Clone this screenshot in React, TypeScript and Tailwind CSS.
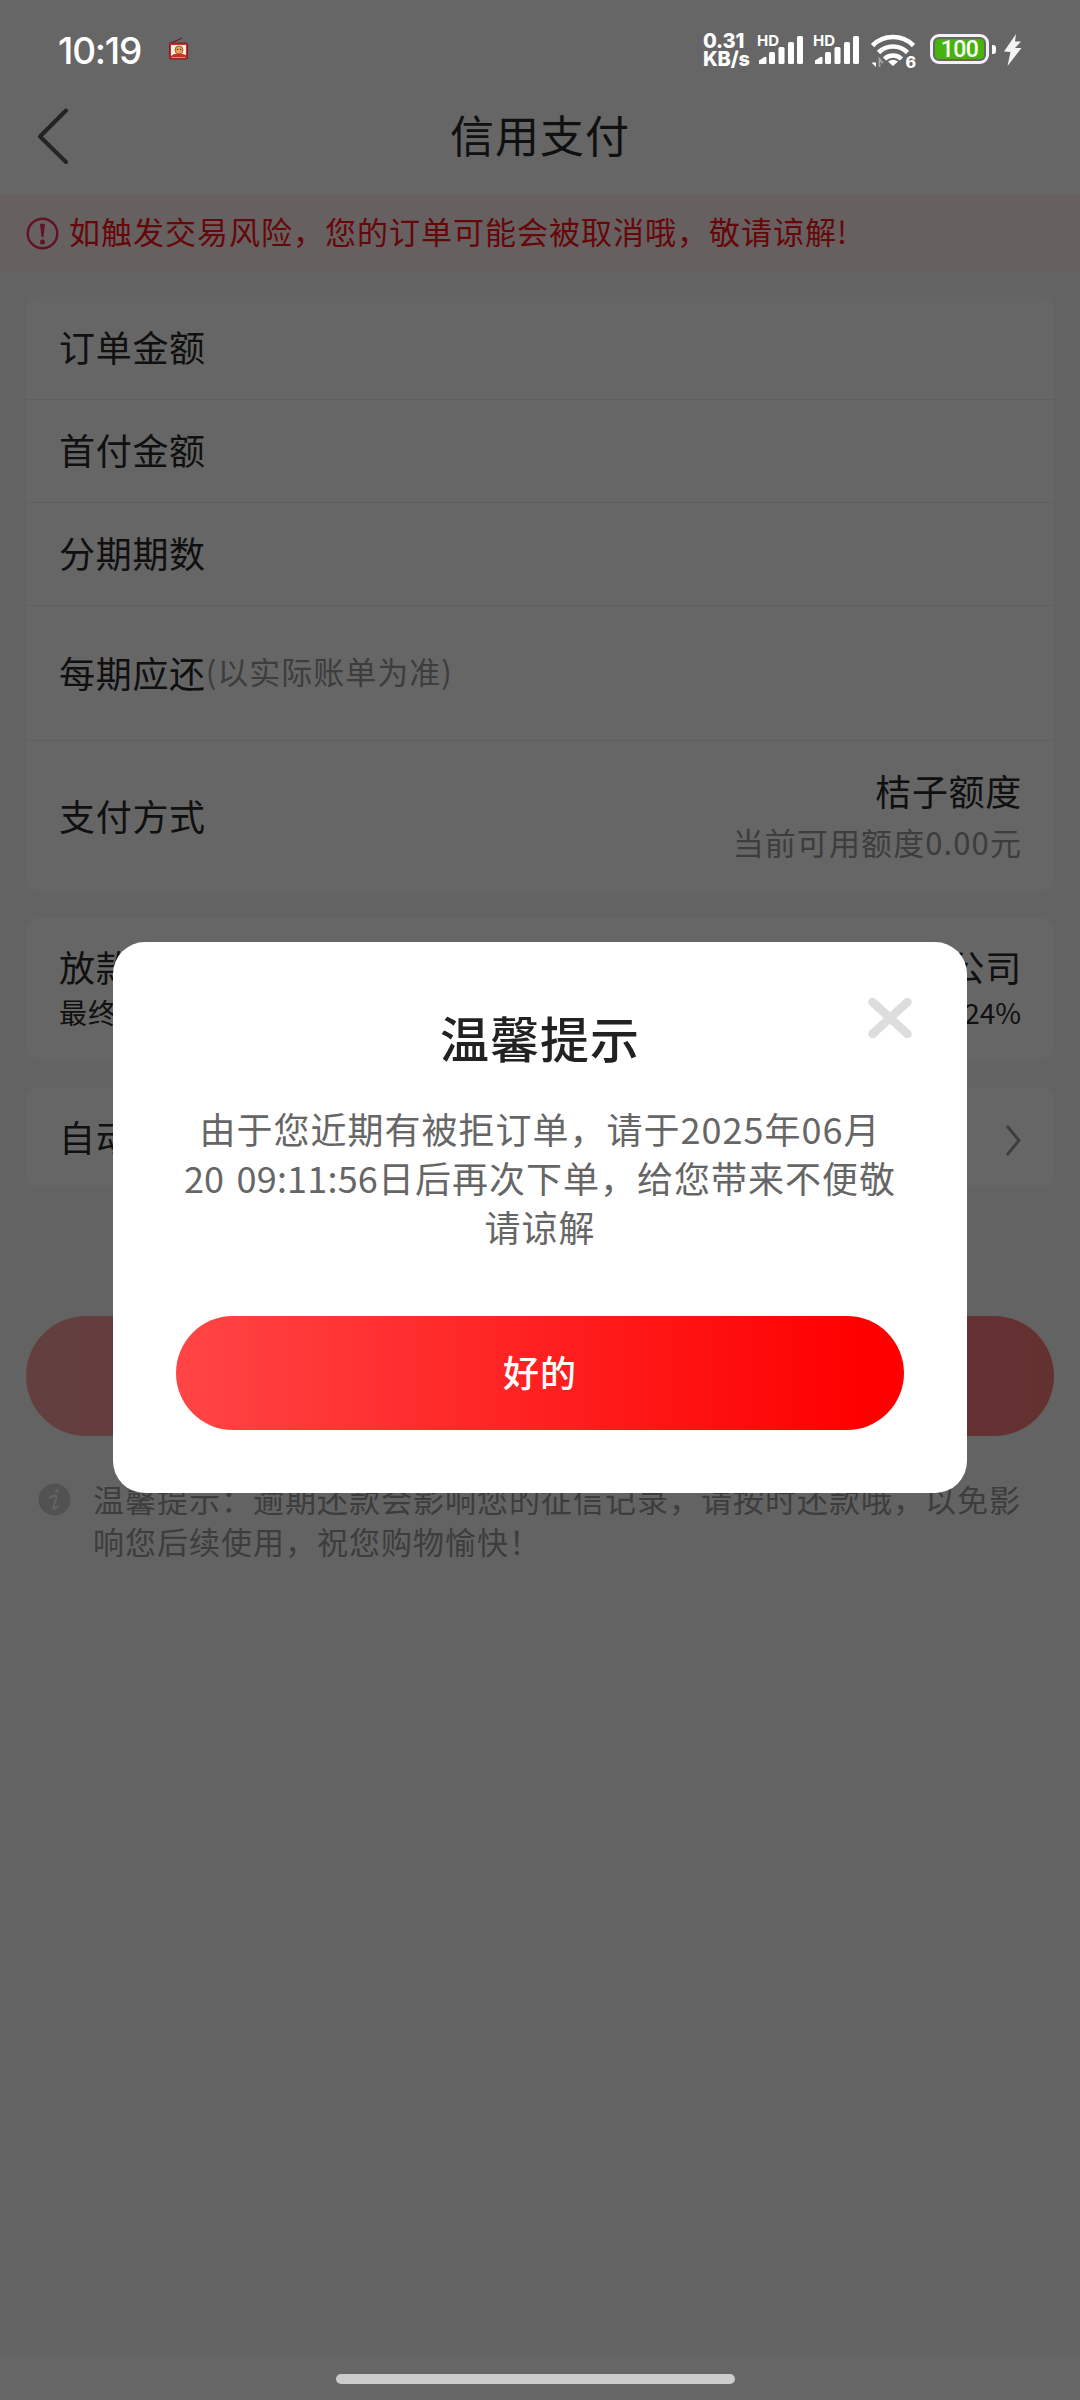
import type { ReactNode } from 'react';

const NOTICE = '如触发交易风险，您的订单可能会被取消哦，敬请谅解!';
const TIP = '温馨提示：逾期还款会影响您的征信记录，请按时还款哦，以免影响您后续使用，祝您购物愉快！';

const PLAIN_ROWS = ['订单金额', '首付金额', '分期期数'];

function SignalBars() {
  return (
    <div className="relative h-[32px] w-[47px]">
      <span className="absolute left-0 -top-px text-[15px] font-bold leading-[15px] text-white">HD</span>
      <svg className="absolute inset-0" width="47" height="32" viewBox="0 0 47 32" fill="#fff">
        <path d="M2 29.5v-3l5.500-3.500q2-.8 2 1v5q0 1-1 1H3q-1 0-1-.5Z" />
        <rect x="12" y="18" width="6" height="12" rx="1.500" />
        <rect x="21.500" y="13" width="6" height="17" rx="1.500" />
        <rect x="31" y="8" width="6" height="22" rx="1.500" />
        <rect x="40" y="2" width="6" height="28" rx="1.500" />
      </svg>
    </div>
  );
}

function WifiIcon() {
  return (
    <div className="relative h-[34px] w-[44px]">
      <svg width="44" height="34" viewBox="0 0 44 34" fill="none" stroke="#fff" strokeWidth="4.600">
        <path d="M1.500 11.500a29 29 0 0 1 41 0" />
        <path d="M7.500 18.500a20.500 20.500 0 0 1 29 0" />
        <path d="M13.500 25a12 12 0 0 1 17 0" />
        <path d="M22 32l-5-4.500q5-3.600 10 0Z" fill="#fff" stroke="none" />
        <path d="M5 24v9L0.500 28.500H5" fill="#fff" stroke="none" />
        <path d="M8.500 33v-8l3.500 4" stroke="#a6a6a6" strokeWidth="1.800" />
      </svg>
      <span className="absolute -right-px bottom-[-2px] text-[16px] font-extrabold leading-[16px] text-white">6</span>
    </div>
  );
}

function Battery() {
  return (
    <div className="flex items-center gap-[3px]">
      <div className="h-[30px] w-[59px] rounded-[9px] border-[3px] border-[#f4f0f8] p-[2px]">
        <div className="flex h-full items-center justify-center rounded-[4px] bg-[#46b40c] pt-[2px] font-['Roboto','Liberation_Sans',sans-serif] text-[23px] font-medium tracking-[-0.5px] text-white">
          100
        </div>
      </div>
      <div className="h-[9px] w-[4px] rounded-r-[3px] bg-white" />
    </div>
  );
}

// small radio icon shown next to the clock
function RadioIcon() {
  return (
    <svg width="22" height="24" viewBox="0 0 22 24" fill="none">
      <path d="M2 6.500L14 1" stroke="#5c2226" strokeWidth="1.200" />
      <rect x="1.500" y="6" width="18" height="16" rx="1" fill="#c92f2c" stroke="#7e2023" />
      <path d="M3 8h15v10l-3-1H6l-3 2Z" fill="#fbeee0" />
      <circle cx="11" cy="13" r="4" fill="#eda05c" stroke="#8c4a28" strokeWidth=".8" />
      <circle cx="9.500" cy="12.500" r=".8" fill="#542" />
      <circle cx="12.500" cy="12.500" r=".8" fill="#542" />
      <path d="M4 20.500h13" stroke="#f08070" />
    </svg>
  );
}

function StatusBar() {
  return (
    <div className="relative z-20 flex h-[92px] shrink-0 font-['Inter','Liberation_Sans',sans-serif] text-white">
      <span className="ml-[58px] mt-[31px] h-[40px] w-[86px] whitespace-nowrap text-[37px] font-medium leading-[40px] tracking-[-1.2px]">
        10:19
      </span>
      <div className="ml-[24px] mt-[37px]">
        <RadioIcon />
      </div>
      <div className="ml-auto mr-[58px] flex items-start pt-[34px]">
        <div className="-mt-[2px] w-[54px] text-[20px] font-extrabold leading-[18px] tracking-[-0.2px]">
          <div>0.31</div>
          <div>KB/s</div>
        </div>
        <SignalBars />
        <div className="ml-[9px]">
          <SignalBars />
        </div>
        <div className="ml-[11px]">
          <WifiIcon />
        </div>
        <div className="ml-[15px]">
          <Battery />
        </div>
        <svg className="ml-[7px]" width="19" height="32" viewBox="0 0 19 32" fill="#f4f4f4">
          <path d="M13 0L1 17.500l6.500.5L4.500 32 18.500 14h-6.500l6-6.500h-6Z" />
        </svg>
      </div>
    </div>
  );
}

function Card({ className, children }: { className: string; children: ReactNode }) {
  return <div className={`mx-[26px] shrink-0 rounded-[14px] bg-white px-[33px] ${className}`}>{children}</div>;
}

function Dialog() {
  return (
    <div className="absolute inset-0 z-10 flex items-start justify-center bg-black/60 pt-[942px]">
      <div className="relative flex h-[551px] w-[854px] flex-col items-center rounded-[32px] bg-white">
        <h2 className="mt-[65px] text-[49px] font-medium leading-[60px] tracking-[1px] text-[#222]">温馨提示</h2>
        <p className="mt-[37px] w-[740px] text-center text-[36px] leading-[49px] tracking-[1px] text-[#666]">
          由于您近期有被拒订单，请于2025年06月
          <br />
          <span className="tracking-[0.2px] [word-spacing:4px]">20 09:11:56</span>日后再次下单，给您带来不便敬
          <br />
          请谅解
        </p>
        <button className="mt-[65px] h-[114px] w-[728px] rounded-full bg-[linear-gradient(90deg,#ff4545,#ff0000_94%)] pb-[4px] text-[36px] font-medium tracking-[1px] text-white">
          好的
        </button>
        <svg className="absolute right-[54px] top-[53px]" width="46" height="46" viewBox="0 0 46 46" stroke="#ddd" strokeWidth="8.500" strokeLinecap="round">
          <path d="M5.500 7L40.500 39M40.500 7L5.500 39" />
        </svg>
      </div>
    </div>
  );
}

export default function App() {
  return (
    <div className="relative flex h-[2400px] w-[1080px] flex-col overflow-hidden bg-[#f7f7f7] font-['Noto_Sans_CJK_SC',sans-serif] text-[#2a2a2a]">
      {/* Status bar and title sit on the same white header */}
      <div className="flex h-[194px] shrink-0 flex-col bg-white">
        <StatusBar />
        <div className="flex h-[87px] items-center pl-[37px]">
          <svg width="32" height="56" viewBox="0 0 32 56" fill="none" stroke="#5a5a5a" strokeWidth="4" strokeLinecap="round" strokeLinejoin="round">
            <path d="M29 2.500L3 28.500L29 54" />
          </svg>
          <h1 className="mb-[4px] mr-[69px] flex-1 text-center text-[44px] leading-[60px] tracking-[1px]">信用支付</h1>
        </div>
      </div>

      <div className="flex h-[79px] shrink-0 items-center bg-[#fff0f0] pl-[26px]">
        <svg width="33" height="33" viewBox="0 0 33 33" fill="none" stroke="#f52e58" strokeWidth="2.400">
          <circle cx="16.500" cy="16.500" r="14.800" />
          <path d="M14 7.500q2.500-2 5 0L17.500 20h-2Z" fill="#f52e58" stroke="none" />
          <circle cx="16.500" cy="25" r="2.500" fill="#f52e58" stroke="none" />
        </svg>
        <span className="mb-[5px] ml-[10px] text-[31px] leading-[48px] tracking-[1px] text-[#ff1218]">{NOTICE}</span>
      </div>

      <Card className="mt-[24px] h-[595px] text-[36px] tracking-[0.7px]">
        {PLAIN_ROWS.map(label => (
          <div key={label} className="-mx-[33px] flex h-[103px] items-center border-b border-[#eee] px-[33px] pb-[4px]">
            {label}
          </div>
        ))}
        <div className="-mx-[33px] flex h-[135px] items-center border-b border-[#eee] px-[33px] pb-[3px]">
          每期应还<span className="text-[31px] tracking-[1px] text-[#999]">(以实际账单为准)</span>
        </div>
        <div className="flex h-[151px] items-center justify-between pb-[2px]">
          <span className="mb-[2px]">支付方式</span>
          <div className="-mr-px text-right">
            <div className="leading-[50px]">桔子额度</div>
            <div className="mt-[2px] text-[31px] leading-[50px] tracking-[1.1px] text-[#999]">当前可用额度0.00元</div>
          </div>
        </div>
      </Card>

      <Card className="mt-[26px] flex h-[142px] flex-col justify-center pb-[4px]">
        <div className="-mr-px flex justify-between text-[36px] leading-[50px] tracking-[0.8px]">
          <span>放款</span>
          <span>公司</span>
        </div>
        <div className="flex justify-between text-[28px] leading-[42px]">
          <span className="tracking-[1px]">最终</span>
          <span>24%</span>
        </div>
      </Card>

      <Card className="mt-[27px] flex h-[100px] items-center justify-between text-[36px] tracking-[0.8px]">
        <span className="mb-[3px]">自动</span>
        <svg className="mt-[5px]" width="16" height="32" viewBox="0 0 16 32" fill="none" stroke="#999" strokeWidth="2.800">
          <path d="M2 2L14 16.500L2 31" />
        </svg>
      </Card>

      <div className="mx-[26px] mt-[129px] h-[120px] shrink-0 rounded-full bg-[linear-gradient(90deg,#ff4545,#ff0000)] opacity-50" />

      <div className="ml-[38px] mt-[42px] flex items-start">
        <svg className="mt-[5px] shrink-0" width="33" height="33" viewBox="0 0 33 33" fill="none">
          <circle cx="16.500" cy="16.500" r="16" fill="#ccc" />
          <circle cx="19" cy="8" r="2" fill="#f7f7f7" />
          <path d="M12 14.500q4-2.500 6-1.500q1 .6-1 6t-1.500 6.500q1 1 4-2" stroke="#f7f7f7" strokeWidth="2.200" strokeLinecap="round" />
        </svg>
        <p className="ml-[22px] w-[940px] text-[31px] leading-[42px] tracking-[1px] text-[#999]">{TIP}</p>
      </div>

      {/* System gesture area */}
      <div className="mt-auto flex h-[45px] shrink-0 bg-white pl-[336px] pt-[19px]">
        <div className="relative z-20 h-[10px] w-[399px] rounded-full bg-[#ccc]" />
      </div>

      <Dialog />
    </div>
  );
}
